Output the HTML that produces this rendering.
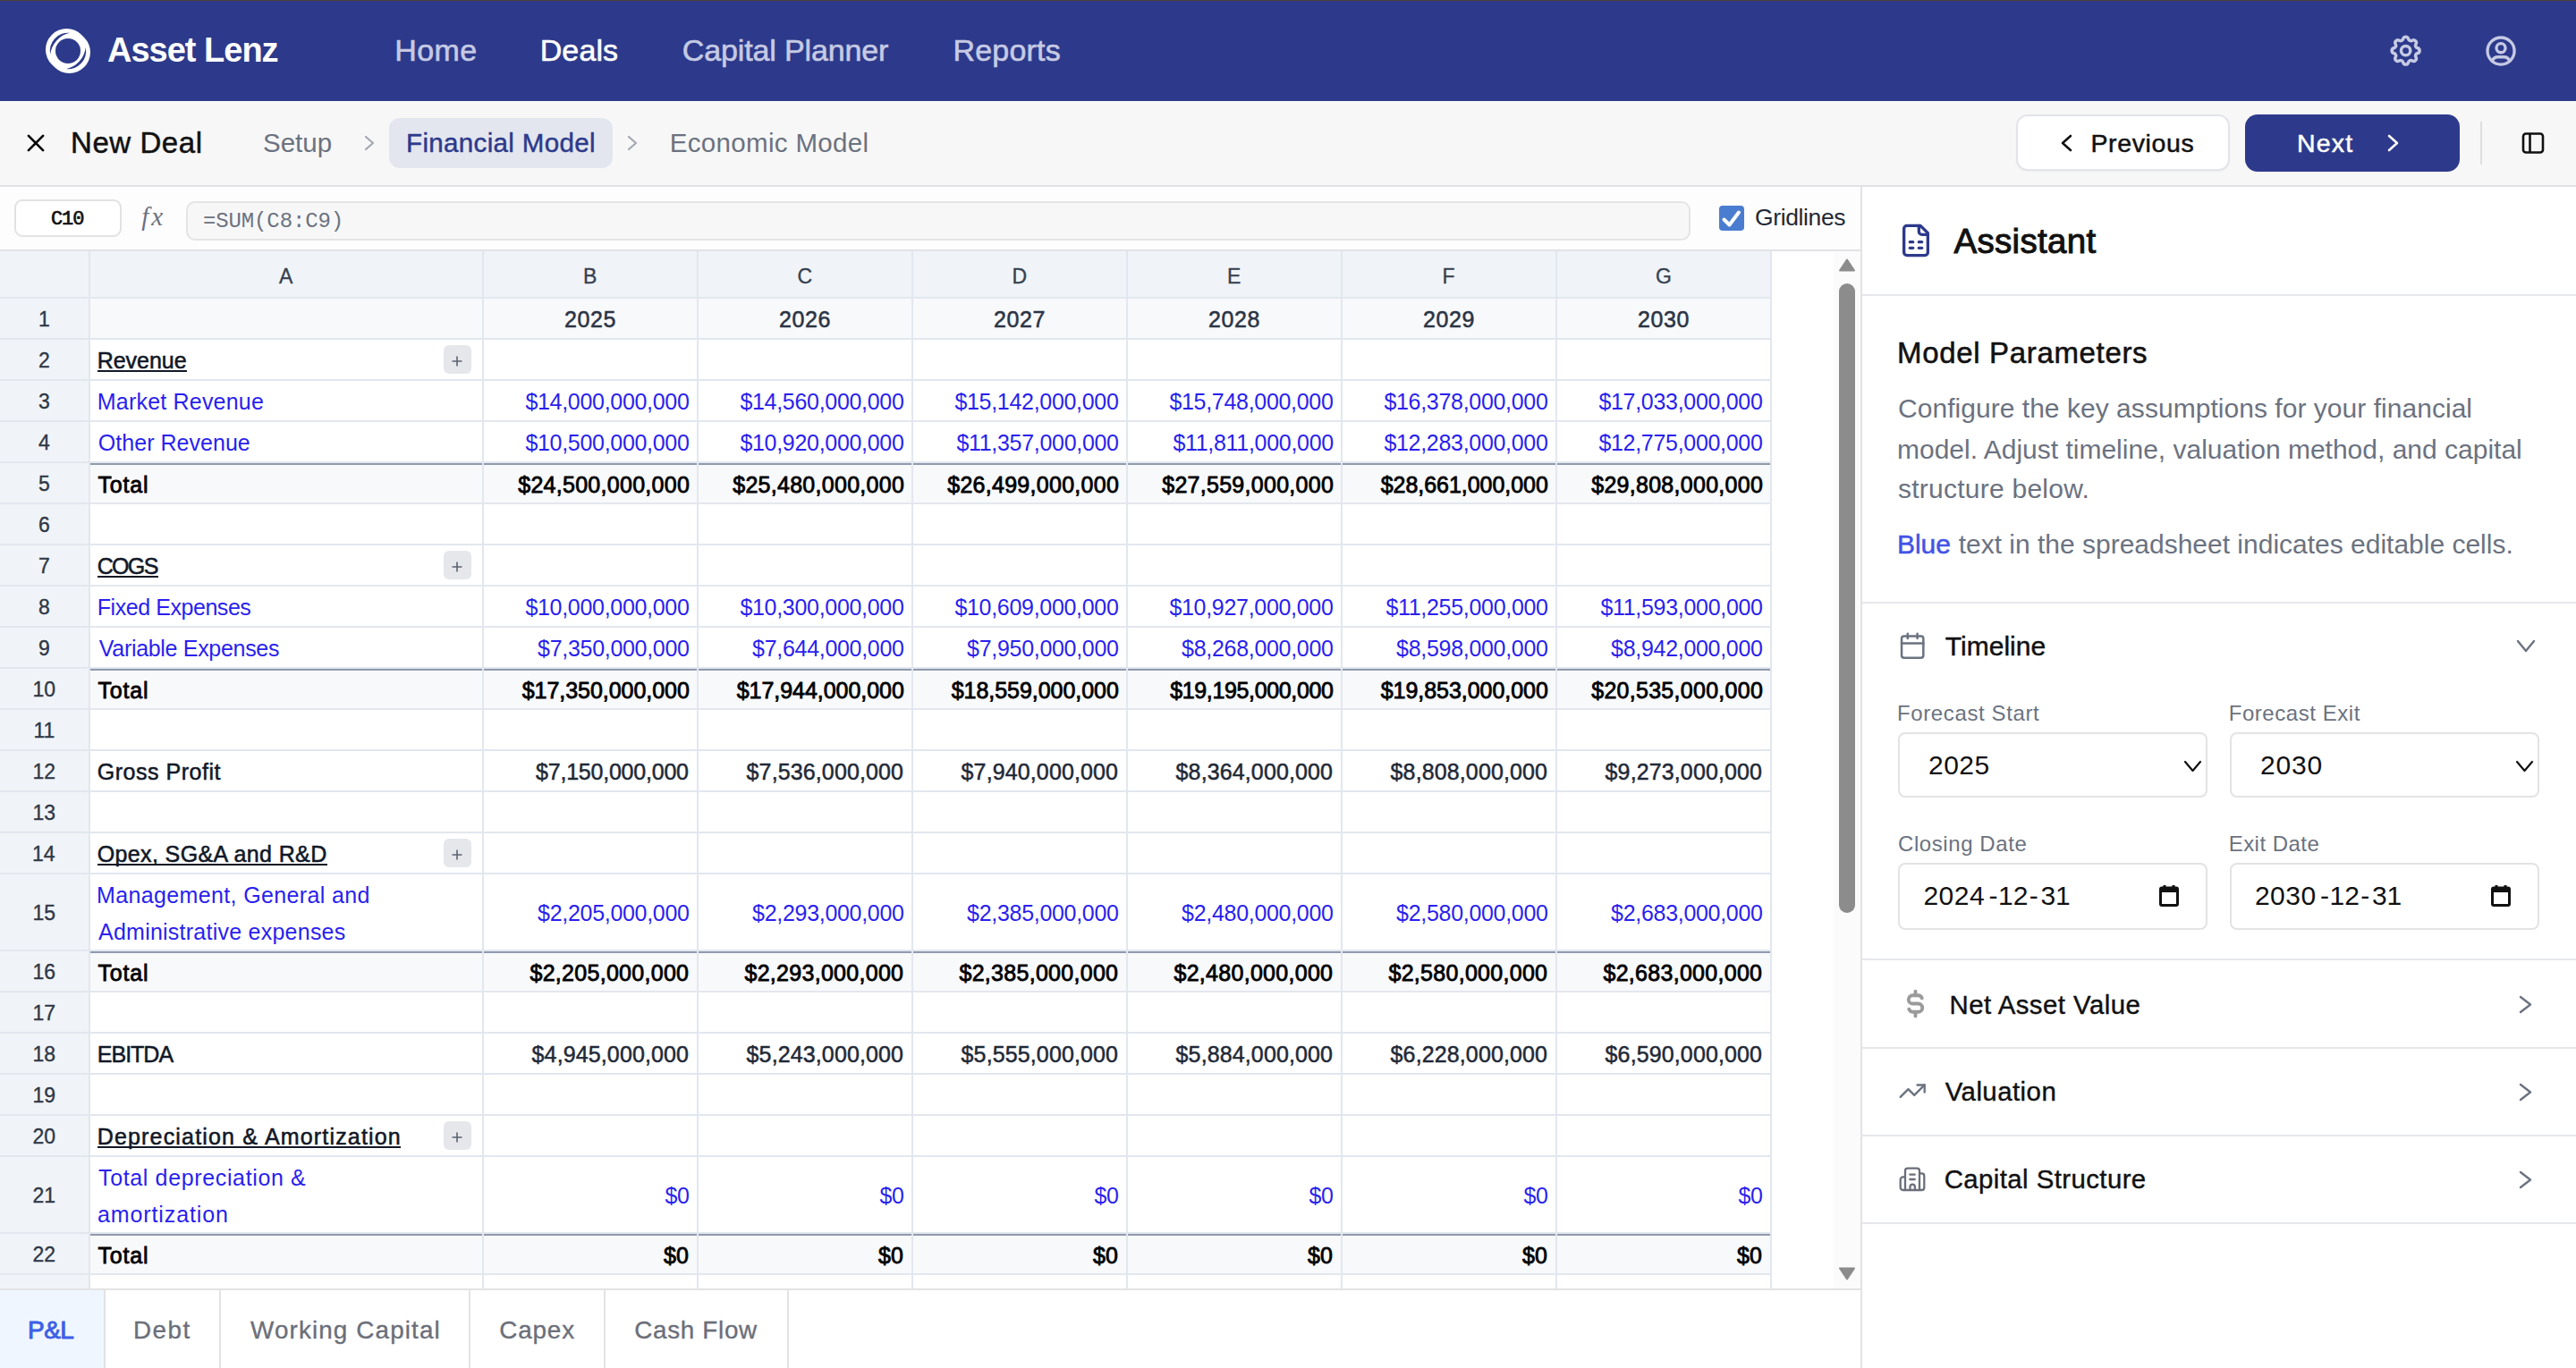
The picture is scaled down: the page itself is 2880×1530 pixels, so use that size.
<!DOCTYPE html>
<html><head><meta charset="utf-8"><title>Asset Lenz</title>
<style>
html,body{margin:0;padding:0;overflow:hidden;}
body{width:2880px;height:1530px;position:relative;background:#fff;font-family:"Liberation Sans",sans-serif;}
#root{position:absolute;left:0;top:0;width:2880px;height:1530px;overflow:hidden;background:#fff;}
@media (max-width:2000px){body{width:1440px;height:765px;} #root{transform:scale(0.5);transform-origin:0 0;}}
.a{position:absolute;}
.t{position:absolute;white-space:nowrap;line-height:normal;}
.S{font-family:"Liberation Sans",sans-serif;}
.M{font-family:"Liberation Mono",monospace;}
.I{font-family:"Liberation Serif",serif;}
</style></head><body><div id="root">
<div class="a" style="left:0px;top:0px;width:2880px;height:113px;background:#2d3a8b;"></div>
<div class="a" style="left:0px;top:0px;width:2880px;height:1px;background:#54403a;"></div>
<div class="a" style="left:0px;top:113px;width:2880px;height:94px;background:#f7f7f7;"></div>
<div class="a" style="left:0px;top:207px;width:2880px;height:2px;background:#e2e2e6;"></div>
<div class="a" style="left:435px;top:132px;width:250px;height:56px;background:#e3e6ef;border-radius:12px;"></div>
<div class="a" style="left:2254px;top:128px;width:239px;height:63px;background:#fff;border:2px solid #e3e4ea;box-sizing:border-box;border-radius:13px;box-shadow:0 1px 2px rgba(0,0,0,0.05);"></div>
<div class="a" style="left:2510px;top:128px;width:240px;height:64px;background:#2d3a8b;border-radius:14px;"></div>
<div class="a" style="left:2773px;top:136px;width:2px;height:48px;background:#dedede;"></div>
<div class="a" style="left:0px;top:209px;width:2080px;height:70px;background:#fdfdfd;"></div>
<div class="a" style="left:0px;top:279px;width:2080px;height:2px;background:#e2e2e6;"></div>
<div class="a" style="left:16px;top:223px;width:120px;height:42px;background:#fff;border:2px solid #e2e2e2;box-sizing:border-box;border-radius:9px;"></div>
<div class="a" style="left:208px;top:225px;width:1682px;height:44px;background:#f7f7f8;border:2px solid #e4e4e4;box-sizing:border-box;border-radius:10px;"></div>
<div class="a" style="left:1922px;top:230px;width:28px;height:28px;background:#4a7dd0;border-radius:4px;"></div>
<div class="a" style="left:0px;top:281px;width:2050px;height:1160px;background:#fff;"></div>
<div class="a" style="left:2050px;top:281px;width:30px;height:1160px;background:#fbfbfb;"></div>
<div class="a" style="left:0px;top:281px;width:1979px;height:51px;background:#f0f4f8;"></div>
<div class="a" style="left:0px;top:281px;width:99px;height:1160px;background:#f0f4f8;"></div>
<div class="a" style="left:101px;top:334px;width:1878px;height:44px;background:#f8f9fb;"></div>
<div class="a" style="left:101px;top:518px;width:1878px;height:44px;background:#f8f9fb;"></div>
<div class="a" style="left:101px;top:748px;width:1878px;height:44px;background:#f8f9fb;"></div>
<div class="a" style="left:101px;top:1064px;width:1878px;height:44px;background:#f8f9fb;"></div>
<div class="a" style="left:101px;top:1380px;width:1878px;height:44px;background:#f8f9fb;"></div>
<div class="a" style="left:101px;top:1426px;width:1878px;height:15px;background:#fff;"></div>
<div class="a" style="left:0px;top:332px;width:1979px;height:2px;background:#e2e7ef;"></div>
<div class="a" style="left:0px;top:378px;width:1979px;height:2px;background:#e2e7ef;"></div>
<div class="a" style="left:0px;top:424px;width:1979px;height:2px;background:#e2e7ef;"></div>
<div class="a" style="left:0px;top:470px;width:1979px;height:2px;background:#e2e7ef;"></div>
<div class="a" style="left:0px;top:516px;width:1979px;height:2px;background:#e2e7ef;"></div>
<div class="a" style="left:0px;top:562px;width:1979px;height:2px;background:#e2e7ef;"></div>
<div class="a" style="left:0px;top:608px;width:1979px;height:2px;background:#e2e7ef;"></div>
<div class="a" style="left:0px;top:654px;width:1979px;height:2px;background:#e2e7ef;"></div>
<div class="a" style="left:0px;top:700px;width:1979px;height:2px;background:#e2e7ef;"></div>
<div class="a" style="left:0px;top:746px;width:1979px;height:2px;background:#e2e7ef;"></div>
<div class="a" style="left:0px;top:792px;width:1979px;height:2px;background:#e2e7ef;"></div>
<div class="a" style="left:0px;top:838px;width:1979px;height:2px;background:#e2e7ef;"></div>
<div class="a" style="left:0px;top:884px;width:1979px;height:2px;background:#e2e7ef;"></div>
<div class="a" style="left:0px;top:930px;width:1979px;height:2px;background:#e2e7ef;"></div>
<div class="a" style="left:0px;top:976px;width:1979px;height:2px;background:#e2e7ef;"></div>
<div class="a" style="left:0px;top:1062px;width:1979px;height:2px;background:#e2e7ef;"></div>
<div class="a" style="left:0px;top:1108px;width:1979px;height:2px;background:#e2e7ef;"></div>
<div class="a" style="left:0px;top:1154px;width:1979px;height:2px;background:#e2e7ef;"></div>
<div class="a" style="left:0px;top:1200px;width:1979px;height:2px;background:#e2e7ef;"></div>
<div class="a" style="left:0px;top:1246px;width:1979px;height:2px;background:#e2e7ef;"></div>
<div class="a" style="left:0px;top:1292px;width:1979px;height:2px;background:#e2e7ef;"></div>
<div class="a" style="left:0px;top:1378px;width:1979px;height:2px;background:#e2e7ef;"></div>
<div class="a" style="left:0px;top:1424px;width:1979px;height:2px;background:#e2e7ef;"></div>
<div class="a" style="left:0px;top:1441px;width:2080px;height:2px;background:#e3e3e3;"></div>
<div class="a" style="left:99px;top:281px;width:2px;height:1160px;background:#e2e7ef;"></div>
<div class="a" style="left:539px;top:281px;width:2px;height:1160px;background:#e2e7ef;"></div>
<div class="a" style="left:779px;top:281px;width:2px;height:1160px;background:#e2e7ef;"></div>
<div class="a" style="left:1019px;top:281px;width:2px;height:1160px;background:#e2e7ef;"></div>
<div class="a" style="left:1259px;top:281px;width:2px;height:1160px;background:#e2e7ef;"></div>
<div class="a" style="left:1499px;top:281px;width:2px;height:1160px;background:#e2e7ef;"></div>
<div class="a" style="left:1739px;top:281px;width:2px;height:1160px;background:#e2e7ef;"></div>
<div class="a" style="left:1979px;top:281px;width:2px;height:1160px;background:#e2e7ef;"></div>
<div class="a" style="left:101px;top:1064px;width:438px;height:2px;background:#8f9aae;"></div>
<div class="a" style="left:541px;top:1064px;width:238px;height:2px;background:#8f9aae;"></div>
<div class="a" style="left:781px;top:1064px;width:238px;height:2px;background:#8f9aae;"></div>
<div class="a" style="left:1021px;top:1064px;width:238px;height:2px;background:#8f9aae;"></div>
<div class="a" style="left:1261px;top:1064px;width:238px;height:2px;background:#8f9aae;"></div>
<div class="a" style="left:1501px;top:1064px;width:238px;height:2px;background:#8f9aae;"></div>
<div class="a" style="left:1741px;top:1064px;width:238px;height:2px;background:#8f9aae;"></div>
<div class="a" style="left:101px;top:748px;width:438px;height:2px;background:#8f9aae;"></div>
<div class="a" style="left:541px;top:748px;width:238px;height:2px;background:#8f9aae;"></div>
<div class="a" style="left:781px;top:748px;width:238px;height:2px;background:#8f9aae;"></div>
<div class="a" style="left:1021px;top:748px;width:238px;height:2px;background:#8f9aae;"></div>
<div class="a" style="left:1261px;top:748px;width:238px;height:2px;background:#8f9aae;"></div>
<div class="a" style="left:1501px;top:748px;width:238px;height:2px;background:#8f9aae;"></div>
<div class="a" style="left:1741px;top:748px;width:238px;height:2px;background:#8f9aae;"></div>
<div class="a" style="left:101px;top:518px;width:438px;height:2px;background:#8f9aae;"></div>
<div class="a" style="left:541px;top:518px;width:238px;height:2px;background:#8f9aae;"></div>
<div class="a" style="left:781px;top:518px;width:238px;height:2px;background:#8f9aae;"></div>
<div class="a" style="left:1021px;top:518px;width:238px;height:2px;background:#8f9aae;"></div>
<div class="a" style="left:1261px;top:518px;width:238px;height:2px;background:#8f9aae;"></div>
<div class="a" style="left:1501px;top:518px;width:238px;height:2px;background:#8f9aae;"></div>
<div class="a" style="left:1741px;top:518px;width:238px;height:2px;background:#8f9aae;"></div>
<div class="a" style="left:101px;top:1380px;width:438px;height:2px;background:#8f9aae;"></div>
<div class="a" style="left:541px;top:1380px;width:238px;height:2px;background:#8f9aae;"></div>
<div class="a" style="left:781px;top:1380px;width:238px;height:2px;background:#8f9aae;"></div>
<div class="a" style="left:1021px;top:1380px;width:238px;height:2px;background:#8f9aae;"></div>
<div class="a" style="left:1261px;top:1380px;width:238px;height:2px;background:#8f9aae;"></div>
<div class="a" style="left:1501px;top:1380px;width:238px;height:2px;background:#8f9aae;"></div>
<div class="a" style="left:1741px;top:1380px;width:238px;height:2px;background:#8f9aae;"></div>
<div class="a" style="left:0px;top:1443px;width:2080px;height:87px;background:#fff;"></div>
<div class="a" style="left:0px;top:1443px;width:117px;height:87px;background:#eff6ff;"></div>
<div class="a" style="left:116px;top:1443px;width:2px;height:87px;background:#e3e3e3;"></div>
<div class="a" style="left:245px;top:1443px;width:2px;height:87px;background:#e3e3e3;"></div>
<div class="a" style="left:524px;top:1443px;width:2px;height:87px;background:#e3e3e3;"></div>
<div class="a" style="left:675px;top:1443px;width:2px;height:87px;background:#e3e3e3;"></div>
<div class="a" style="left:880px;top:1443px;width:2px;height:87px;background:#e3e3e3;"></div>
<div class="a" style="left:2080px;top:209px;width:2px;height:1321px;background:#e3e3e3;"></div>
<div class="a" style="left:2082px;top:209px;width:798px;height:1321px;background:#fff;"></div>
<div class="a" style="left:2082px;top:329px;width:798px;height:2px;background:#e5e7eb;"></div>
<div class="a" style="left:2082px;top:673px;width:798px;height:2px;background:#e5e7eb;"></div>
<div class="a" style="left:2122px;top:819px;width:346px;height:73px;background:#fff;border:2px solid #e3e3e3;box-sizing:border-box;border-radius:8px;"></div>
<div class="a" style="left:2493px;top:819px;width:346px;height:73px;background:#fff;border:2px solid #e3e3e3;box-sizing:border-box;border-radius:8px;"></div>
<div class="a" style="left:2122px;top:965px;width:346px;height:75px;background:#fff;border:2px solid #e3e3e3;box-sizing:border-box;border-radius:8px;"></div>
<div class="a" style="left:2493px;top:965px;width:346px;height:75px;background:#fff;border:2px solid #e3e3e3;box-sizing:border-box;border-radius:8px;"></div>
<div class="a" style="left:2082px;top:1072px;width:798px;height:2px;background:#e5e7eb;"></div>
<div class="a" style="left:2082px;top:1171px;width:798px;height:2px;background:#e5e7eb;"></div>
<div class="a" style="left:2082px;top:1269px;width:798px;height:2px;background:#e5e7eb;"></div>
<div class="a" style="left:2082px;top:1367px;width:798px;height:2px;background:#e5e7eb;"></div>
<div class="t S" style="left:120.00px;top:35.00px;font-size:38px;color:#fff;font-weight:700;letter-spacing:-1.000px;">Asset Lenz</div>
<div class="t S" style="left:441.30px;top:36.79px;font-size:34px;color:#c6cae4;letter-spacing:0.367px;-webkit-text-stroke:0.6px #c6cae4;">Home</div>
<div class="t S" style="left:603.70px;top:36.79px;font-size:34px;color:#fff;letter-spacing:0.125px;-webkit-text-stroke:0.6px #fff;">Deals</div>
<div class="t S" style="left:762.80px;top:36.79px;font-size:34px;color:#c6cae4;letter-spacing:-0.136px;-webkit-text-stroke:0.6px #c6cae4;">Capital Planner</div>
<div class="t S" style="left:1065.50px;top:36.79px;font-size:34px;color:#c6cae4;letter-spacing:0.183px;-webkit-text-stroke:0.6px #c6cae4;">Reports</div>
<div class="t S" style="left:79.00px;top:140.61px;font-size:33px;color:#111;letter-spacing:0.571px;-webkit-text-stroke:0.5px #111;">New Deal</div>
<div class="t S" style="left:294.00px;top:142.83px;font-size:29.5px;color:#6b7280;">Setup</div>
<div class="t S" style="left:454.00px;top:142.83px;font-size:29.5px;color:#2d3a8b;letter-spacing:0.357px;-webkit-text-stroke:0.45px #2d3a8b;">Financial Model</div>
<div class="t S" style="left:748.70px;top:142.83px;font-size:29.5px;color:#6b7280;letter-spacing:0.331px;">Economic Model</div>
<div class="t S" style="left:2337.40px;top:143.95px;font-size:28.5px;color:#111;letter-spacing:0.643px;-webkit-text-stroke:0.5px #111;">Previous</div>
<div class="t S" style="left:2568.00px;top:144.15px;font-size:28.5px;color:#fff;letter-spacing:1.200px;-webkit-text-stroke:0.5px #fff;">Next</div>
<div class="t M" style="left:56.90px;top:233.28px;font-size:22px;color:#111;letter-spacing:-1.050px;-webkit-text-stroke:0.7px #111;">C10</div>
<div class="t I" style="left:158.20px;top:225.55px;font-size:29px;color:#6b7280;letter-spacing:3.100px;font-style:italic;">fx</div>
<div class="t M" style="left:227.00px;top:234.42px;font-size:24px;color:#6b7280;letter-spacing:-0.130px;">=SUM(C8:C9)</div>
<div class="t S" style="left:1962.00px;top:227.59px;font-size:26.5px;color:#1f2937;letter-spacing:-0.375px;">Gridlines</div>
<div class="t S" style="left:312.00px;top:296.12px;font-size:23px;color:#374151;-webkit-text-stroke:0.35px #374151;">A</div>
<div class="t S" style="left:652.00px;top:296.12px;font-size:23px;color:#374151;-webkit-text-stroke:0.35px #374151;">B</div>
<div class="t S" style="left:891.50px;top:296.12px;font-size:23px;color:#374151;-webkit-text-stroke:0.35px #374151;">C</div>
<div class="t S" style="left:1131.50px;top:296.12px;font-size:23px;color:#374151;-webkit-text-stroke:0.35px #374151;">D</div>
<div class="t S" style="left:1372.00px;top:296.12px;font-size:23px;color:#374151;-webkit-text-stroke:0.35px #374151;">E</div>
<div class="t S" style="left:1612.50px;top:296.12px;font-size:23px;color:#374151;-webkit-text-stroke:0.35px #374151;">F</div>
<div class="t S" style="left:1851.00px;top:296.12px;font-size:23px;color:#374151;-webkit-text-stroke:0.35px #374151;">G</div>
<div class="t S" style="left:43.00px;top:344.12px;font-size:23px;color:#2f3746;-webkit-text-stroke:0.35px #2f3746;">1</div>
<div class="t S" style="left:43.00px;top:390.12px;font-size:23px;color:#2f3746;-webkit-text-stroke:0.35px #2f3746;">2</div>
<div class="t S" style="left:43.00px;top:436.12px;font-size:23px;color:#2f3746;-webkit-text-stroke:0.35px #2f3746;">3</div>
<div class="t S" style="left:43.00px;top:482.12px;font-size:23px;color:#2f3746;-webkit-text-stroke:0.35px #2f3746;">4</div>
<div class="t S" style="left:43.00px;top:528.12px;font-size:23px;color:#2f3746;-webkit-text-stroke:0.35px #2f3746;">5</div>
<div class="t S" style="left:43.00px;top:574.12px;font-size:23px;color:#2f3746;-webkit-text-stroke:0.35px #2f3746;">6</div>
<div class="t S" style="left:43.00px;top:620.12px;font-size:23px;color:#2f3746;-webkit-text-stroke:0.35px #2f3746;">7</div>
<div class="t S" style="left:43.00px;top:666.12px;font-size:23px;color:#2f3746;-webkit-text-stroke:0.35px #2f3746;">8</div>
<div class="t S" style="left:43.00px;top:712.12px;font-size:23px;color:#2f3746;-webkit-text-stroke:0.35px #2f3746;">9</div>
<div class="t S" style="left:36.50px;top:758.12px;font-size:23px;color:#2f3746;-webkit-text-stroke:0.35px #2f3746;">10</div>
<div class="t S" style="left:37.50px;top:804.12px;font-size:23px;color:#2f3746;-webkit-text-stroke:0.35px #2f3746;">11</div>
<div class="t S" style="left:36.50px;top:850.12px;font-size:23px;color:#2f3746;-webkit-text-stroke:0.35px #2f3746;">12</div>
<div class="t S" style="left:36.50px;top:896.12px;font-size:23px;color:#2f3746;-webkit-text-stroke:0.35px #2f3746;">13</div>
<div class="t S" style="left:36.00px;top:942.12px;font-size:23px;color:#2f3746;-webkit-text-stroke:0.35px #2f3746;">14</div>
<div class="t S" style="left:36.50px;top:1008.12px;font-size:23px;color:#2f3746;-webkit-text-stroke:0.35px #2f3746;">15</div>
<div class="t S" style="left:36.50px;top:1074.12px;font-size:23px;color:#2f3746;-webkit-text-stroke:0.35px #2f3746;">16</div>
<div class="t S" style="left:36.50px;top:1120.12px;font-size:23px;color:#2f3746;-webkit-text-stroke:0.35px #2f3746;">17</div>
<div class="t S" style="left:36.50px;top:1166.12px;font-size:23px;color:#2f3746;-webkit-text-stroke:0.35px #2f3746;">18</div>
<div class="t S" style="left:36.50px;top:1212.12px;font-size:23px;color:#2f3746;-webkit-text-stroke:0.35px #2f3746;">19</div>
<div class="t S" style="left:36.50px;top:1258.12px;font-size:23px;color:#2f3746;-webkit-text-stroke:0.35px #2f3746;">20</div>
<div class="t S" style="left:36.50px;top:1324.12px;font-size:23px;color:#2f3746;-webkit-text-stroke:0.35px #2f3746;">21</div>
<div class="t S" style="left:36.50px;top:1390.12px;font-size:23px;color:#2f3746;-webkit-text-stroke:0.35px #2f3746;">22</div>
<div class="t S" style="left:631.10px;top:343.28px;font-size:25px;color:#2b3445;letter-spacing:0.600px;-webkit-text-stroke:0.55px #2b3445;">2025</div>
<div class="t S" style="left:871.10px;top:343.28px;font-size:25px;color:#2b3445;letter-spacing:0.600px;-webkit-text-stroke:0.55px #2b3445;">2026</div>
<div class="t S" style="left:1111.10px;top:343.28px;font-size:25px;color:#2b3445;letter-spacing:0.600px;-webkit-text-stroke:0.55px #2b3445;">2027</div>
<div class="t S" style="left:1351.10px;top:343.28px;font-size:25px;color:#2b3445;letter-spacing:0.600px;-webkit-text-stroke:0.55px #2b3445;">2028</div>
<div class="t S" style="left:1591.10px;top:343.28px;font-size:25px;color:#2b3445;letter-spacing:0.600px;-webkit-text-stroke:0.55px #2b3445;">2029</div>
<div class="t S" style="left:1831.10px;top:343.28px;font-size:25px;color:#2b3445;letter-spacing:0.600px;-webkit-text-stroke:0.55px #2b3445;">2030</div>
<div class="t S" style="left:108.70px;top:389.38px;font-size:25px;color:#111827;letter-spacing:-0.033px;-webkit-text-stroke:0.55px #111827;">Revenue</div>
<div class="t S" style="left:108.80px;top:435.38px;font-size:25px;color:#2a1fee;letter-spacing:0.200px;">Market Revenue</div>
<div class="t S" style="left:109.80px;top:481.38px;font-size:25px;color:#2a1fee;letter-spacing:0.033px;">Other Revenue</div>
<div class="t S" style="left:109.50px;top:528.17px;font-size:25px;color:#000;letter-spacing:0.825px;-webkit-text-stroke:0.8px #000;">Total</div>
<div class="t S" style="left:108.70px;top:619.38px;font-size:25px;color:#111827;letter-spacing:-1.667px;-webkit-text-stroke:0.55px #111827;">COGS</div>
<div class="t S" style="left:108.80px;top:665.38px;font-size:25px;color:#2a1fee;letter-spacing:-0.446px;">Fixed Expenses</div>
<div class="t S" style="left:110.80px;top:711.38px;font-size:25px;color:#2a1fee;letter-spacing:-0.312px;">Variable Expenses</div>
<div class="t S" style="left:109.50px;top:758.17px;font-size:25px;color:#000;letter-spacing:0.825px;-webkit-text-stroke:0.8px #000;">Total</div>
<div class="t S" style="left:108.80px;top:849.38px;font-size:25px;color:#111827;letter-spacing:0.518px;-webkit-text-stroke:0.5px #111827;">Gross Profit</div>
<div class="t S" style="left:108.70px;top:941.38px;font-size:25px;color:#111827;letter-spacing:0.376px;-webkit-text-stroke:0.55px #111827;">Opex, SG&amp;A and R&amp;D</div>
<div class="t S" style="left:109.50px;top:1074.17px;font-size:25px;color:#000;letter-spacing:0.825px;-webkit-text-stroke:0.8px #000;">Total</div>
<div class="t S" style="left:108.80px;top:1165.38px;font-size:25px;color:#111827;letter-spacing:-1.000px;-webkit-text-stroke:0.5px #111827;">EBITDA</div>
<div class="t S" style="left:108.70px;top:1257.38px;font-size:25px;color:#111827;letter-spacing:1.177px;-webkit-text-stroke:0.55px #111827;">Depreciation &amp; Amortization</div>
<div class="t S" style="left:109.50px;top:1390.17px;font-size:25px;color:#000;letter-spacing:0.825px;-webkit-text-stroke:0.8px #000;">Total</div>
<div class="t S" style="left:108.00px;top:987.38px;font-size:25px;color:#2a1fee;letter-spacing:0.364px;">Management, General and</div>
<div class="t S" style="left:110.00px;top:1028.38px;font-size:25px;color:#2a1fee;letter-spacing:0.241px;">Administrative expenses</div>
<div class="t S" style="left:110.00px;top:1303.38px;font-size:25px;color:#2a1fee;letter-spacing:0.642px;">Total depreciation &amp;</div>
<div class="t S" style="left:109.00px;top:1344.38px;font-size:25px;color:#2a1fee;letter-spacing:0.882px;">amortization</div>
<div class="t S" style="left:587.40px;top:435.28px;font-size:25px;color:#2a1fee;letter-spacing:-0.300px;">$14,000,000,000</div>
<div class="t S" style="left:827.40px;top:435.28px;font-size:25px;color:#2a1fee;letter-spacing:-0.300px;">$14,560,000,000</div>
<div class="t S" style="left:1067.40px;top:435.28px;font-size:25px;color:#2a1fee;letter-spacing:-0.300px;">$15,142,000,000</div>
<div class="t S" style="left:1307.40px;top:435.28px;font-size:25px;color:#2a1fee;letter-spacing:-0.300px;">$15,748,000,000</div>
<div class="t S" style="left:1547.40px;top:435.28px;font-size:25px;color:#2a1fee;letter-spacing:-0.300px;">$16,378,000,000</div>
<div class="t S" style="left:1787.40px;top:435.28px;font-size:25px;color:#2a1fee;letter-spacing:-0.300px;">$17,033,000,000</div>
<div class="t S" style="left:587.40px;top:481.28px;font-size:25px;color:#2a1fee;letter-spacing:-0.300px;">$10,500,000,000</div>
<div class="t S" style="left:827.40px;top:481.28px;font-size:25px;color:#2a1fee;letter-spacing:-0.300px;">$10,920,000,000</div>
<div class="t S" style="left:1069.40px;top:481.28px;font-size:25px;color:#2a1fee;letter-spacing:-0.300px;">$11,357,000,000</div>
<div class="t S" style="left:1311.40px;top:481.28px;font-size:25px;color:#2a1fee;letter-spacing:-0.300px;">$11,811,000,000</div>
<div class="t S" style="left:1547.40px;top:481.28px;font-size:25px;color:#2a1fee;letter-spacing:-0.300px;">$12,283,000,000</div>
<div class="t S" style="left:1787.40px;top:481.28px;font-size:25px;color:#2a1fee;letter-spacing:-0.300px;">$12,775,000,000</div>
<div class="t S" style="left:579.20px;top:528.07px;font-size:25px;color:#000;letter-spacing:0.286px;-webkit-text-stroke:0.8px #000;">$24,500,000,000</div>
<div class="t S" style="left:819.20px;top:528.07px;font-size:25px;color:#000;letter-spacing:0.286px;-webkit-text-stroke:0.8px #000;">$25,480,000,000</div>
<div class="t S" style="left:1059.20px;top:528.07px;font-size:25px;color:#000;letter-spacing:0.286px;-webkit-text-stroke:0.8px #000;">$26,499,000,000</div>
<div class="t S" style="left:1299.20px;top:528.07px;font-size:25px;color:#000;letter-spacing:0.286px;-webkit-text-stroke:0.8px #000;">$27,559,000,000</div>
<div class="t S" style="left:1543.70px;top:528.07px;font-size:25px;color:#000;letter-spacing:-0.036px;-webkit-text-stroke:0.8px #000;">$28,661,000,000</div>
<div class="t S" style="left:1779.20px;top:528.07px;font-size:25px;color:#000;letter-spacing:0.286px;-webkit-text-stroke:0.8px #000;">$29,808,000,000</div>
<div class="t S" style="left:587.40px;top:665.27px;font-size:25px;color:#2a1fee;letter-spacing:-0.300px;">$10,000,000,000</div>
<div class="t S" style="left:827.40px;top:665.27px;font-size:25px;color:#2a1fee;letter-spacing:-0.300px;">$10,300,000,000</div>
<div class="t S" style="left:1067.40px;top:665.27px;font-size:25px;color:#2a1fee;letter-spacing:-0.300px;">$10,609,000,000</div>
<div class="t S" style="left:1307.40px;top:665.27px;font-size:25px;color:#2a1fee;letter-spacing:-0.300px;">$10,927,000,000</div>
<div class="t S" style="left:1549.40px;top:665.27px;font-size:25px;color:#2a1fee;letter-spacing:-0.300px;">$11,255,000,000</div>
<div class="t S" style="left:1789.40px;top:665.27px;font-size:25px;color:#2a1fee;letter-spacing:-0.300px;">$11,593,000,000</div>
<div class="t S" style="left:601.10px;top:711.27px;font-size:25px;color:#2a1fee;letter-spacing:-0.300px;">$7,350,000,000</div>
<div class="t S" style="left:841.10px;top:711.27px;font-size:25px;color:#2a1fee;letter-spacing:-0.300px;">$7,644,000,000</div>
<div class="t S" style="left:1081.10px;top:711.27px;font-size:25px;color:#2a1fee;letter-spacing:-0.300px;">$7,950,000,000</div>
<div class="t S" style="left:1321.10px;top:711.27px;font-size:25px;color:#2a1fee;letter-spacing:-0.300px;">$8,268,000,000</div>
<div class="t S" style="left:1561.10px;top:711.27px;font-size:25px;color:#2a1fee;letter-spacing:-0.300px;">$8,598,000,000</div>
<div class="t S" style="left:1801.10px;top:711.27px;font-size:25px;color:#2a1fee;letter-spacing:-0.300px;">$8,942,000,000</div>
<div class="t S" style="left:583.70px;top:758.07px;font-size:25px;color:#000;letter-spacing:-0.036px;-webkit-text-stroke:0.8px #000;">$17,350,000,000</div>
<div class="t S" style="left:823.70px;top:758.07px;font-size:25px;color:#000;letter-spacing:-0.036px;-webkit-text-stroke:0.8px #000;">$17,944,000,000</div>
<div class="t S" style="left:1063.70px;top:758.07px;font-size:25px;color:#000;letter-spacing:-0.036px;-webkit-text-stroke:0.8px #000;">$18,559,000,000</div>
<div class="t S" style="left:1308.20px;top:758.07px;font-size:25px;color:#000;letter-spacing:-0.357px;-webkit-text-stroke:0.8px #000;">$19,195,000,000</div>
<div class="t S" style="left:1543.70px;top:758.07px;font-size:25px;color:#000;letter-spacing:-0.036px;-webkit-text-stroke:0.8px #000;">$19,853,000,000</div>
<div class="t S" style="left:1779.20px;top:758.07px;font-size:25px;color:#000;letter-spacing:0.286px;-webkit-text-stroke:0.8px #000;">$20,535,000,000</div>
<div class="t S" style="left:599.10px;top:849.27px;font-size:25px;color:#1f2937;letter-spacing:-0.223px;-webkit-text-stroke:0.5px #1f2937;">$7,150,000,000</div>
<div class="t S" style="left:834.60px;top:849.27px;font-size:25px;color:#1f2937;letter-spacing:0.123px;-webkit-text-stroke:0.5px #1f2937;">$7,536,000,000</div>
<div class="t S" style="left:1074.60px;top:849.27px;font-size:25px;color:#1f2937;letter-spacing:0.123px;-webkit-text-stroke:0.5px #1f2937;">$7,940,000,000</div>
<div class="t S" style="left:1314.60px;top:849.27px;font-size:25px;color:#1f2937;letter-spacing:0.123px;-webkit-text-stroke:0.5px #1f2937;">$8,364,000,000</div>
<div class="t S" style="left:1554.60px;top:849.27px;font-size:25px;color:#1f2937;letter-spacing:0.123px;-webkit-text-stroke:0.5px #1f2937;">$8,808,000,000</div>
<div class="t S" style="left:1794.60px;top:849.27px;font-size:25px;color:#1f2937;letter-spacing:0.123px;-webkit-text-stroke:0.5px #1f2937;">$9,273,000,000</div>
<div class="t S" style="left:601.10px;top:1007.27px;font-size:25px;color:#2a1fee;letter-spacing:-0.300px;">$2,205,000,000</div>
<div class="t S" style="left:841.10px;top:1007.27px;font-size:25px;color:#2a1fee;letter-spacing:-0.300px;">$2,293,000,000</div>
<div class="t S" style="left:1081.10px;top:1007.27px;font-size:25px;color:#2a1fee;letter-spacing:-0.300px;">$2,385,000,000</div>
<div class="t S" style="left:1321.10px;top:1007.27px;font-size:25px;color:#2a1fee;letter-spacing:-0.300px;">$2,480,000,000</div>
<div class="t S" style="left:1561.10px;top:1007.27px;font-size:25px;color:#2a1fee;letter-spacing:-0.300px;">$2,580,000,000</div>
<div class="t S" style="left:1801.10px;top:1007.27px;font-size:25px;color:#2a1fee;letter-spacing:-0.300px;">$2,683,000,000</div>
<div class="t S" style="left:592.49px;top:1074.07px;font-size:25px;color:#000;letter-spacing:0.286px;-webkit-text-stroke:0.8px #000;">$2,205,000,000</div>
<div class="t S" style="left:832.49px;top:1074.07px;font-size:25px;color:#000;letter-spacing:0.286px;-webkit-text-stroke:0.8px #000;">$2,293,000,000</div>
<div class="t S" style="left:1072.49px;top:1074.07px;font-size:25px;color:#000;letter-spacing:0.286px;-webkit-text-stroke:0.8px #000;">$2,385,000,000</div>
<div class="t S" style="left:1312.49px;top:1074.07px;font-size:25px;color:#000;letter-spacing:0.286px;-webkit-text-stroke:0.8px #000;">$2,480,000,000</div>
<div class="t S" style="left:1552.49px;top:1074.07px;font-size:25px;color:#000;letter-spacing:0.286px;-webkit-text-stroke:0.8px #000;">$2,580,000,000</div>
<div class="t S" style="left:1792.49px;top:1074.07px;font-size:25px;color:#000;letter-spacing:0.286px;-webkit-text-stroke:0.8px #000;">$2,683,000,000</div>
<div class="t S" style="left:594.60px;top:1165.27px;font-size:25px;color:#1f2937;letter-spacing:0.123px;-webkit-text-stroke:0.5px #1f2937;">$4,945,000,000</div>
<div class="t S" style="left:834.60px;top:1165.27px;font-size:25px;color:#1f2937;letter-spacing:0.123px;-webkit-text-stroke:0.5px #1f2937;">$5,243,000,000</div>
<div class="t S" style="left:1074.60px;top:1165.27px;font-size:25px;color:#1f2937;letter-spacing:0.123px;-webkit-text-stroke:0.5px #1f2937;">$5,555,000,000</div>
<div class="t S" style="left:1314.60px;top:1165.27px;font-size:25px;color:#1f2937;letter-spacing:0.123px;-webkit-text-stroke:0.5px #1f2937;">$5,884,000,000</div>
<div class="t S" style="left:1554.60px;top:1165.27px;font-size:25px;color:#1f2937;letter-spacing:0.123px;-webkit-text-stroke:0.5px #1f2937;">$6,228,000,000</div>
<div class="t S" style="left:1794.60px;top:1165.27px;font-size:25px;color:#1f2937;letter-spacing:0.123px;-webkit-text-stroke:0.5px #1f2937;">$6,590,000,000</div>
<div class="t S" style="left:743.50px;top:1323.27px;font-size:25px;color:#2a1fee;letter-spacing:-0.300px;">$0</div>
<div class="t S" style="left:983.50px;top:1323.27px;font-size:25px;color:#2a1fee;letter-spacing:-0.300px;">$0</div>
<div class="t S" style="left:1223.50px;top:1323.27px;font-size:25px;color:#2a1fee;letter-spacing:-0.300px;">$0</div>
<div class="t S" style="left:1463.50px;top:1323.27px;font-size:25px;color:#2a1fee;letter-spacing:-0.300px;">$0</div>
<div class="t S" style="left:1703.50px;top:1323.27px;font-size:25px;color:#2a1fee;letter-spacing:-0.300px;">$0</div>
<div class="t S" style="left:1943.50px;top:1323.27px;font-size:25px;color:#2a1fee;letter-spacing:-0.300px;">$0</div>
<div class="t S" style="left:741.91px;top:1390.07px;font-size:25px;color:#000;letter-spacing:0.286px;-webkit-text-stroke:0.8px #000;">$0</div>
<div class="t S" style="left:981.91px;top:1390.07px;font-size:25px;color:#000;letter-spacing:0.286px;-webkit-text-stroke:0.8px #000;">$0</div>
<div class="t S" style="left:1221.91px;top:1390.07px;font-size:25px;color:#000;letter-spacing:0.286px;-webkit-text-stroke:0.8px #000;">$0</div>
<div class="t S" style="left:1461.91px;top:1390.07px;font-size:25px;color:#000;letter-spacing:0.286px;-webkit-text-stroke:0.8px #000;">$0</div>
<div class="t S" style="left:1701.91px;top:1390.07px;font-size:25px;color:#000;letter-spacing:0.286px;-webkit-text-stroke:0.8px #000;">$0</div>
<div class="t S" style="left:1941.91px;top:1390.07px;font-size:25px;color:#000;letter-spacing:0.286px;-webkit-text-stroke:0.8px #000;">$0</div>
<div class="t S" style="left:31.00px;top:1471.81px;font-size:28px;color:#3d60e6;letter-spacing:-0.500px;-webkit-text-stroke:0.9px #3d60e6;">P&amp;L</div>
<div class="t S" style="left:149.00px;top:1472.00px;font-size:27.8px;color:#6b6f7a;letter-spacing:1.467px;-webkit-text-stroke:0.35px #6b6f7a;">Debt</div>
<div class="t S" style="left:280.00px;top:1472.00px;font-size:27.8px;color:#6b6f7a;letter-spacing:1.143px;-webkit-text-stroke:0.35px #6b6f7a;">Working Capital</div>
<div class="t S" style="left:558.20px;top:1472.00px;font-size:27.8px;color:#6b6f7a;letter-spacing:0.875px;-webkit-text-stroke:0.35px #6b6f7a;">Capex</div>
<div class="t S" style="left:709.20px;top:1472.00px;font-size:27.8px;color:#6b6f7a;letter-spacing:0.712px;-webkit-text-stroke:0.35px #6b6f7a;">Cash Flow</div>
<div class="t S" style="left:2184.40px;top:247.54px;font-size:38.5px;color:#111;letter-spacing:0.325px;-webkit-text-stroke:1.0px #111;">Assistant</div>
<div class="t S" style="left:2121.00px;top:376.11px;font-size:33px;color:#111;letter-spacing:0.667px;-webkit-text-stroke:0.55px #111;">Model Parameters</div>
<div class="t S" style="left:2122.00px;top:440.37px;font-size:30px;color:#6b7280;letter-spacing:0.036px;">Configure the key assumptions for your financial</div>
<div class="t S" style="left:2121.00px;top:485.57px;font-size:30px;color:#6b7280;">model. Adjust timeline, valuation method, and capital</div>
<div class="t S" style="left:2122.00px;top:529.87px;font-size:30px;color:#6b7280;letter-spacing:0.244px;">structure below.</div>
<div class="t S" style="left:2121.00px;top:591.77px;font-size:30px;color:#4353e6;letter-spacing:-0.073px;-webkit-text-stroke:0.5px #4353e6;">Blue</div>
<div class="t S" style="left:2189.65px;top:591.77px;font-size:30px;color:#6b7280;letter-spacing:-0.006px;">text in the spreadsheet indicates editable cells.</div>
<div class="t S" style="left:2174.70px;top:705.97px;font-size:30px;color:#111;letter-spacing:0.043px;-webkit-text-stroke:0.45px #111;">Timeline</div>
<div class="t S" style="left:2121.00px;top:783.90px;font-size:24px;color:#6b7280;letter-spacing:0.615px;">Forecast Start</div>
<div class="t S" style="left:2491.66px;top:783.90px;font-size:24px;color:#6b7280;letter-spacing:0.560px;">Forecast Exit</div>
<div class="t S" style="left:2156.00px;top:838.87px;font-size:30px;color:#111;letter-spacing:0.500px;">2025</div>
<div class="t S" style="left:2527.00px;top:838.87px;font-size:30px;color:#111;letter-spacing:0.843px;">2030</div>
<div class="t S" style="left:2122.00px;top:929.90px;font-size:24px;color:#6b7280;letter-spacing:0.582px;">Closing Date</div>
<div class="t S" style="left:2491.66px;top:929.90px;font-size:24px;color:#6b7280;letter-spacing:0.470px;">Exit Date</div>
<div class="t S" style="left:2150.40px;top:985.37px;font-size:30px;color:#111;letter-spacing:0.533px;">2024</div>
<div class="t S" style="left:2223.50px;top:985.37px;font-size:30px;color:#111;">-</div>
<div class="t S" style="left:2234.00px;top:985.37px;font-size:30px;color:#111;">12</div>
<div class="t S" style="left:2268.80px;top:985.37px;font-size:30px;color:#111;">-</div>
<div class="t S" style="left:2281.40px;top:985.37px;font-size:30px;color:#111;">31</div>
<div class="t S" style="left:2520.90px;top:985.37px;font-size:30px;color:#111;letter-spacing:0.533px;">2030</div>
<div class="t S" style="left:2594.00px;top:985.37px;font-size:30px;color:#111;">-</div>
<div class="t S" style="left:2604.50px;top:985.37px;font-size:30px;color:#111;">12</div>
<div class="t S" style="left:2639.30px;top:985.37px;font-size:30px;color:#111;">-</div>
<div class="t S" style="left:2651.90px;top:985.37px;font-size:30px;color:#111;">31</div>
<div class="t S" style="left:2179.50px;top:1106.52px;font-size:29.4px;color:#111;letter-spacing:0.464px;-webkit-text-stroke:0.4px #111;">Net Asset Value</div>
<div class="t S" style="left:2174.70px;top:1204.32px;font-size:29.4px;color:#111;letter-spacing:0.461px;-webkit-text-stroke:0.4px #111;">Valuation</div>
<div class="t S" style="left:2173.70px;top:1301.92px;font-size:29.4px;color:#111;letter-spacing:0.413px;-webkit-text-stroke:0.4px #111;">Capital Structure</div>
<svg class="a" style="left:46px;top:26px;" width="60" height="60" viewBox="46 26 60 60" fill="none"><circle cx="74.5" cy="55.5" r="23.5" fill="#fff"/><circle cx="77.5" cy="58.5" r="23.5" fill="#fff"/><circle cx="76" cy="57" r="14" fill="#2d3a8b"/><path d="M56.2 61 A20.2 20.2 0 0 1 78 36.8 A28 28 0 0 0 56.2 61 Z" fill="#2d3a8b"/><path d="M95.8 53 A20.2 20.2 0 0 1 74 77.2 A28 28 0 0 0 95.8 53 Z" fill="#2d3a8b"/></svg>
<svg class="a" style="left:2669.3681818181817px;top:36.36818181818182px;" width="41.263636363636365" height="41.263636363636365" viewBox="0 0 24 24" fill="none"><g stroke="#c6cae4" stroke-width="2.05" stroke-linecap="round" stroke-linejoin="round"><path d="M10.325 4.317c.426 -1.756 2.924 -1.756 3.35 0a1.724 1.724 0 0 0 2.573 1.066c1.543 -.94 3.31 .826 2.37 2.37a1.724 1.724 0 0 0 1.065 2.572c1.756 .426 1.756 2.924 0 3.35a1.724 1.724 0 0 0 -1.066 2.573c.94 1.543 -.826 3.31 -2.37 2.37a1.724 1.724 0 0 0 -2.572 1.065c-.426 1.756 -2.924 1.756 -3.35 0a1.724 1.724 0 0 0 -2.573 -1.066c-1.543 .94 -3.31 -.826 -2.37 -2.37a1.724 1.724 0 0 0 -1.065 -2.572c-1.756 -.426 -1.756 -2.924 0 -3.35a1.724 1.724 0 0 0 1.066 -2.573c-.94 -1.543 .826 -3.31 2.37 -2.37c1 .608 2.296 .07 2.572 -1.065z"/><path d="M9 12a3 3 0 1 0 6 0a3 3 0 0 0 -6 0"/></g></svg>
<svg class="a" style="left:2775.9493670886077px;top:36.949367088607595px;" width="40.10126582278481" height="40.10126582278481" viewBox="0 0 24 24" fill="none"><g stroke="#c6cae4" stroke-width="2.0" stroke-linecap="round" stroke-linejoin="round"><circle cx="12" cy="12" r="9"/><circle cx="12" cy="10" r="3"/><path d="M6.168 18.849a4 4 0 0 1 3.832 -2.849h4a4 4 0 0 1 3.834 2.855"/></g></svg>
<svg class="a" style="left:24px;top:144px;" width="32" height="32" viewBox="24 144 32 32" fill="none"><path d="M31.9 151.9 L48.1 168.1 M48.1 151.9 L31.9 168.1" stroke="#000" stroke-width="2.7" stroke-linecap="round"/></svg>
<svg class="a" style="left:405px;top:149px;" width="16" height="22" viewBox="405 149 16 22" fill="none"><path d="M409 153 L417 160 L409 167" stroke="#a3a7b0" stroke-width="2.2" stroke-linecap="round" stroke-linejoin="round"/></svg>
<svg class="a" style="left:699px;top:149px;" width="16" height="22" viewBox="699 149 16 22" fill="none"><path d="M703 153 L711 160 L703 167" stroke="#a3a7b0" stroke-width="2.2" stroke-linecap="round" stroke-linejoin="round"/></svg>
<svg class="a" style="left:2301.5px;top:148px;" width="17.0" height="24" viewBox="2301.5 148 17.0 24" fill="none"><path d="M2314.5 152 L2305.5 160 L2314.5 168" stroke="#111" stroke-width="2.6" stroke-linecap="round" stroke-linejoin="round"/></svg>
<svg class="a" style="left:2667.0px;top:148px;" width="17.0" height="24" viewBox="2667.0 148 17.0 24" fill="none"><path d="M2671.0 152 L2680.0 160 L2671.0 168" stroke="#fff" stroke-width="2.6" stroke-linecap="round" stroke-linejoin="round"/></svg>
<svg class="a" style="left:2814px;top:142px;" width="36" height="36" viewBox="2814 142 36 36" fill="none"><rect x="2821" y="149.5" width="22" height="21" rx="3" stroke="#111" stroke-width="2.6"/><path d="M2828.5 149.5 V170.5" stroke="#111" stroke-width="2.6"/></svg>
<svg class="a" style="left:1922px;top:230px;" width="28" height="28" viewBox="0 0 28 28" fill="none"><path d="M5.5 15.5 L11.5 21.5 L22 7.5" stroke="#fff" stroke-width="4" stroke-linecap="round" stroke-linejoin="round"/></svg>
<div class="a" style="left:109px;top:413.59999999999997px;width:100.0px;height:2.0px;background:#111827;"></div>
<div class="a" style="left:495.5px;top:386.3px;width:31.5px;height:31.399999999999977px;background:#e5e7eb;border-radius:6px;"></div>
<svg class="a" style="left:499px;top:390.0px;" width="24" height="24" viewBox="0 0 24 24" fill="none"><path d="M12 8.5 V19.5 M6.5 14 H17.5" stroke="#5b6370" stroke-width="1.6"/></svg>
<div class="a" style="left:109px;top:643.6px;width:68.19999999999999px;height:2.0px;background:#111827;"></div>
<div class="a" style="left:495.5px;top:616.3px;width:31.5px;height:31.40000000000009px;background:#e5e7eb;border-radius:6px;"></div>
<svg class="a" style="left:499px;top:620.0px;" width="24" height="24" viewBox="0 0 24 24" fill="none"><path d="M12 8.5 V19.5 M6.5 14 H17.5" stroke="#5b6370" stroke-width="1.6"/></svg>
<div class="a" style="left:109px;top:965.6px;width:256.6px;height:2.0px;background:#111827;"></div>
<div class="a" style="left:495.5px;top:938.3px;width:31.5px;height:31.40000000000009px;background:#e5e7eb;border-radius:6px;"></div>
<svg class="a" style="left:499px;top:942.0px;" width="24" height="24" viewBox="0 0 24 24" fill="none"><path d="M12 8.5 V19.5 M6.5 14 H17.5" stroke="#5b6370" stroke-width="1.6"/></svg>
<div class="a" style="left:109px;top:1281.6000000000001px;width:338.8px;height:2.0px;background:#111827;"></div>
<div class="a" style="left:495.5px;top:1254.3px;width:31.5px;height:31.40000000000009px;background:#e5e7eb;border-radius:6px;"></div>
<svg class="a" style="left:499px;top:1258.0px;" width="24" height="24" viewBox="0 0 24 24" fill="none"><path d="M12 8.5 V19.5 M6.5 14 H17.5" stroke="#5b6370" stroke-width="1.6"/></svg>
<svg class="a" style="left:2050px;top:281px;" width="30" height="1160" viewBox="2050 281 30 1160" fill="none"><path d="M2065 290.5 L2073 302.5 L2057 302.5 Z" fill="#8c8c8c" stroke="#8c8c8c" stroke-width="2" stroke-linejoin="round"/><rect x="2056" y="317" width="18" height="704" rx="9" fill="#8c8c8c"/><path d="M2065 1430.5 L2073 1418.5 L2057 1418.5 Z" fill="#8c8c8c" stroke="#8c8c8c" stroke-width="2" stroke-linejoin="round"/></svg>
<svg class="a" style="left:2122.2px;top:248.7px;" width="40" height="40" viewBox="0 0 24 24" fill="none"><g stroke="#2d3a8b" stroke-width="2" stroke-linecap="round" stroke-linejoin="round"><path d="M15 2H6a2 2 0 0 0-2 2v16a2 2 0 0 0 2 2h12a2 2 0 0 0 2-2V7Z"/><path d="M14 2v4a2 2 0 0 0 2 2h4"/><path d="M8 13h2"/><path d="M14 13h2"/><path d="M8 17h2"/><path d="M14 17h2"/></g></svg>
<svg class="a" style="left:2121.7px;top:705.8px;" width="32.4" height="32.4" viewBox="0 0 24 24" fill="none"><g stroke="#6b7280" stroke-width="1.85" stroke-linecap="round" stroke-linejoin="round"><path d="M8 2v4"/><path d="M16 2v4"/><rect width="18" height="18" x="3" y="4" rx="2"/><path d="M3 10h18"/></g></svg>
<svg class="a" style="left:2810.7px;top:713.0px;" width="26" height="19.0" viewBox="2810.7 713.0 26 19.0" fill="none"><path d="M2814.7 717.0 L2823.7 728.0 L2832.7 717.0" stroke="#6b7280" stroke-width="2.4" stroke-linecap="round" stroke-linejoin="round"/></svg>
<svg class="a" style="left:2439.2px;top:847.5px;" width="25.0" height="18" viewBox="2439.2 847.5 25.0 18" fill="none"><path d="M2443.2 851.5 L2451.7 861.5 L2460.2 851.5" stroke="#111" stroke-width="2.2" stroke-linecap="round" stroke-linejoin="round"/></svg>
<svg class="a" style="left:2810.3571428571427px;top:847.5px;" width="25.0" height="18" viewBox="2810.3571428571427 847.5 25.0 18" fill="none"><path d="M2814.3571428571427 851.5 L2822.8571428571427 861.5 L2831.3571428571427 851.5" stroke="#111" stroke-width="2.2" stroke-linecap="round" stroke-linejoin="round"/></svg>
<svg class="a" style="left:2414px;top:989px;" width="22" height="25" viewBox="0 0 22 25" fill="none"><rect x="1.5" y="4" width="19" height="19.5" rx="1.5" stroke="#111" stroke-width="3"/><rect x="1.5" y="4" width="19" height="5" fill="#111"/><path d="M6 1 V5 M16 1 V5" stroke="#111" stroke-width="3"/></svg>
<svg class="a" style="left:2784.83850931677px;top:989px;" width="22" height="25" viewBox="0 0 22 25" fill="none"><rect x="1.5" y="4" width="19" height="19.5" rx="1.5" stroke="#111" stroke-width="3"/><rect x="1.5" y="4" width="19" height="5" fill="#111"/><path d="M6 1 V5 M16 1 V5" stroke="#111" stroke-width="3"/></svg>
<svg class="a" style="left:2122.5px;top:1104.4px;" width="37" height="37" viewBox="0 0 24 24" fill="none"><g stroke="#9b9b9b" stroke-width="2.5" stroke-linecap="round" stroke-linejoin="round"><path d="M16.7 8a3 3 0 0 0 -2.7 -2h-4a3 3 0 0 0 0 6h4a3 3 0 0 1 0 6h-4a3 3 0 0 1 -2.7 -2"/><path d="M12 3v3m0 12v3"/></g></svg>
<svg class="a" style="left:2814.0px;top:1111.0px;" width="19.0" height="25.0" viewBox="2814.0 1111.0 19.0 25.0" fill="none"><path d="M2818.0 1115.0 L2829.0 1123.5 L2818.0 1132.0" stroke="#6b7280" stroke-width="2.4" stroke-linecap="round" stroke-linejoin="round"/></svg>
<svg class="a" style="left:2122.1px;top:1204.3px;" width="32.4" height="32.4" viewBox="0 0 24 24" fill="none"><g stroke="#6b7280" stroke-width="1.75" stroke-linecap="round" stroke-linejoin="round"><polyline points="22 7 13.5 15.5 8.5 10.5 2 17"/><polyline points="16 7 22 7 22 13"/></g></svg>
<svg class="a" style="left:2814.0px;top:1209.0px;" width="19.0" height="25.0" viewBox="2814.0 1209.0 19.0 25.0" fill="none"><path d="M2818.0 1213.0 L2829.0 1221.5 L2818.0 1230.0" stroke="#6b7280" stroke-width="2.4" stroke-linecap="round" stroke-linejoin="round"/></svg>
<svg class="a" style="left:2115px;top:1295px;" width="50" height="50" viewBox="2115 1295 50 50" fill="none"><g stroke="#6b6f7b" stroke-width="2.3" stroke-linecap="round" stroke-linejoin="round"><path d="M2130 1331 V1309.5 a2.8 2.8 0 0 1 2.8 -2.8 h10.4 a2.8 2.8 0 0 1 2.8 2.8 V1331"/><path d="M2130 1316.4 h-2.5 a2.8 2.8 0 0 0 -2.8 2.8 V1328.2 a2.8 2.8 0 0 0 2.8 2.8 h21 a2.8 2.8 0 0 0 2.8 -2.8 V1315.2 a2.8 2.8 0 0 0 -2.8 -2.8 h-2.5"/><path d="M2135.3 1313.6 h5.5 M2135.3 1319 h5.5"/><path d="M2135.5 1331 v-3.6 a2.7 2.7 0 0 1 5.4 0 v3.6"/></g></svg>
<svg class="a" style="left:2814.0px;top:1307.0px;" width="19.0" height="25.0" viewBox="2814.0 1307.0 19.0 25.0" fill="none"><path d="M2818.0 1311.0 L2829.0 1319.5 L2818.0 1328.0" stroke="#6b7280" stroke-width="2.4" stroke-linecap="round" stroke-linejoin="round"/></svg>
</div></body></html>
